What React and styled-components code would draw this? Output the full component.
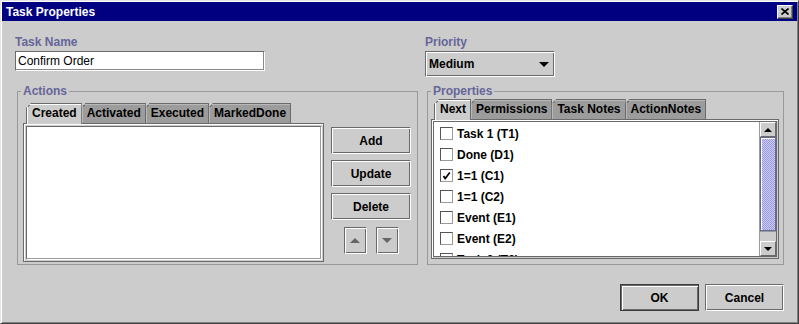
import React from "react";
import styled, { createGlobalStyle } from "styled-components";

const GlobalStyle = createGlobalStyle`
  html, body {
    margin: 0;
    padding: 0;
    background: #cccccc;
  }
  body {
    font-family: "Liberation Sans", Arial, sans-serif;
    font-size: 12px;
  }
  * {
    box-sizing: border-box;
  }
`;

const Window = styled.div`
  width: 799px;
  height: 324px;
  padding: 1px;
  display: flex;
  flex-direction: column;
  background: #cccccc;
  border: 1px solid;
  border-color: #e4e4e4 #404040 #404040 #e4e4e4;
  box-shadow: inset 1px 1px 0 #ffffff, inset -1px -1px 0 #808080;
`;

const TitleBar = styled.div`
  height: 19px;
  flex: none;
  display: flex;
  align-items: center;
  justify-content: space-between;
  padding: 0 4px 0 4px;
  background: #000080;
  color: #ffffff;
  font-weight: bold;
  font-size: 12px;
`;

const CloseButton = styled.div`
  width: 16px;
  height: 14px;
  display: flex;
  align-items: center;
  justify-content: center;
  background: #cccccc;
  border: 1px solid;
  border-color: #ffffff #404040 #404040 #ffffff;
  box-shadow: inset -1px -1px 0 #808080;
`;

const Body = styled.div`
  flex: 1;
  padding: 14px 13px 0 13px;
`;

const TopGrid = styled.div`
  display: grid;
  grid-template-columns: 410px 359px;
  row-gap: 7px;
`;

const Field = styled.div`
  display: flex;
  flex-direction: column;
  align-items: flex-start;
`;

const Label = styled.div`
  height: 15px;
  line-height: 15px;
  margin-bottom: 1px;
  color: #666699;
  font-weight: bold;
`;

const TextField = styled.input`
  width: 250px;
  height: 20px;
  margin: 0;
  padding: 0 2px;
  font: 12px "Liberation Sans", Arial, sans-serif;
  color: #000000;
  background: #ffffff;
  border: 1px solid;
  border-color: #6a6a6a #ffffff #ffffff #6a6a6a;
  box-shadow: inset -1px -1px 0 #8a8a8a;
  outline: none;
`;

const Combo = styled.div`
  width: 130px;
  height: 26px;
  display: flex;
  align-items: center;
  justify-content: space-between;
  padding: 0 5px 0 3px;
  font-weight: bold;
  background: #cccccc;
  border: 1px solid;
  border-color: #6a6a6a #ffffff #ffffff #6a6a6a;
  box-shadow: inset 1px 1px 0 #ffffff, inset -1px -1px 0 #6a6a6a;
`;

const Group = styled.fieldset`
  margin: 0 0 0 2px;
  width: ${({ $w }) => $w}px;
  padding: ${({ $pad }) => $pad};
  border: 1px solid #999999;
  min-inline-size: 0;
`;

const Legend = styled.legend`
  padding: 0 2px;
  margin-left: ${({ $shift }) => $shift}px;
  line-height: 15px;
  color: #666699;
  font-weight: bold;
`;

const ActionsRow = styled.div`
  display: flex;
  align-items: flex-start;
`;

const TabArea = styled.div`
  width: ${({ $w }) => $w}px;
  display: flex;
  flex-direction: column;
`;

const TabStrip = styled.div`
  height: 20px;
  display: flex;
  align-items: flex-end;
  padding-left: 3px;
`;

const Tab = styled.div`
  position: relative;
  z-index: ${({ $active }) => ($active ? 2 : 1)};
  height: ${({ $active }) => ($active ? 21 : 20)}px;
  margin-bottom: ${({ $active }) => ($active ? -1 : 0)}px;
  margin-left: -1px;
  padding: 2px 4px 0 5px;
  line-height: 15px;
  font-weight: bold;
  color: #000000;
  white-space: nowrap;
  background-color: ${({ $active }) => ($active ? "#cccccc" : "#9c9c9c")};
  background-image: linear-gradient(
    135deg,
    transparent 3.2px,
    #6a6a6a 3.2px,
    #6a6a6a 4.6px,
    transparent 4.6px
  );
  background-origin: border-box;
  border: 1px solid #6a6a6a;
  border-bottom: none;
  box-shadow: ${({ $active }) =>
    $active ? "inset 1px 1px 0 #ffffff" : "inset 1px 1px 0 #b8b8b8"};
  clip-path: polygon(5px 0, 100% 0, 100% 100%, 0 100%, 0 5px);

  &:first-child {
    margin-left: 0;
  }
`;

const Panel = styled.div`
  height: ${({ $h }) => $h}px;
  display: flex;
  padding: ${({ $p }) => $p}px;
  background: #cccccc;
  border: 1px solid #6a6a6a;
  box-shadow: inset 1px 1px 0 #ffffff;
`;

const WhiteBox = styled.div`
  flex: 1;
  background: #ffffff;
  border: 1px solid;
  border-color: #6a6a6a #9a9a9a #9a9a9a #6a6a6a;
  box-shadow: 1px 1px 0 #ffffff;
`;

const ButtonColumn = styled.div`
  width: 80px;
  margin-left: 7px;
  padding-top: 24px;
  display: flex;
  flex-direction: column;
  gap: 6px;
`;

const Button = styled.button`
  width: ${({ $w }) => $w}px;
  height: 27px;
  margin: 0;
  padding: 0;
  display: flex;
  align-items: center;
  justify-content: center;
  font: bold 12px "Liberation Sans", Arial, sans-serif;
  color: #000000;
  background: #cccccc;
  border: 1px solid;
  border-color: ${({ $default }) =>
    $default ? "#3a3a3a" : "#6a6a6a #ffffff #ffffff #6a6a6a"};
  box-shadow: ${({ $default }) =>
    $default
      ? "inset 1px 1px 0 #6a6a6a, inset 2px 2px 0 #ffffff, inset -1px -1px 0 #6a6a6a"
      : "inset 1px 1px 0 #ffffff, inset -1px -1px 0 #6a6a6a"};
`;

const ArrowRow = styled.div`
  display: flex;
  justify-content: center;
  gap: 9px;
  margin-top: 1px;
`;

const ScrollPane = styled.div`
  flex: 1;
  display: flex;
  border: 1px solid #6a6a6a;
  background: #ffffff;
`;

const List = styled.div`
  flex: 1;
  padding-top: 1px;
  overflow: hidden;
`;

const Row = styled.div`
  height: 21px;
  display: flex;
  align-items: center;
  gap: 4px;
  padding-left: 6px;
  font-weight: bold;
  color: #000000;
  white-space: nowrap;
`;

const Check = styled.span`
  width: 13px;
  height: 13px;
  flex: none;
  display: flex;
  align-items: center;
  justify-content: center;
  background: #ffffff;
  border: 1px solid;
  border-color: #555555 #9a9a9a #9a9a9a #555555;
`;

const ScrollBar = styled.div`
  width: 17px;
  display: flex;
  flex-direction: column;
  background: #cccccc;
  border-left: 1px solid #9a9a9a;
`;

const ScrollButton = styled.div`
  height: 15px;
  flex: none;
  display: flex;
  align-items: center;
  justify-content: center;
  background: #cccccc;
  border: 1px solid;
  border-color: #ffffff #6a6a6a #6a6a6a #ffffff;
`;

const Thumb = styled.div`
  height: 94px;
  flex: none;
  border: 1px solid #666699;
  background: repeating-conic-gradient(#9a9ad0 0 25%, #ccccff 0 50%) 0 0 / 2px 2px;
  box-shadow: inset 1px 1px 0 #ffffff;
`;

const Track = styled.div`
  flex: 1;
  background: #cccccc;
  border-top: 1px solid #9a9a9a;
`;

const Footer = styled.div`
  display: flex;
  justify-content: flex-end;
  gap: 6px;
  margin-top: 19px;
`;

const Triangle = ({ dir = "down", w = 10, h = 5, color = "#000" }) => (
  <svg width={w} height={h} viewBox={`0 0 ${w} ${h}`}>
    <polygon
      points={
        dir === "down"
          ? `0,0 ${w},0 ${w / 2},${h}`
          : `0,${h} ${w},${h} ${w / 2},0`
      }
      fill={color}
    />
  </svg>
);

const actionTabs = ["Created", "Activated", "Executed", "MarkedDone"];
const propTabs = ["Next", "Permissions", "Task Notes", "ActionNotes"];
const items = [
  { label: "Task 1 (T1)", on: false },
  { label: "Done (D1)", on: false },
  { label: "1=1 (C1)", on: true },
  { label: "1=1 (C2)", on: false },
  { label: "Event (E1)", on: false },
  { label: "Event (E2)", on: false },
  { label: "Task 2 (T2)", on: false },
];

export default function App() {
  return (
    <>
      <GlobalStyle />
      <Window>
        <TitleBar>
          <span>Task Properties</span>
          <CloseButton>
            <svg width="8" height="7" viewBox="0 0 8 7">
              <path d="M0.5 0.5 L7.5 6.5 M7.5 0.5 L0.5 6.5" stroke="#000" strokeWidth="1.6" />
            </svg>
          </CloseButton>
        </TitleBar>
        <Body>
          <TopGrid>
            <Field>
              <Label>Task Name</Label>
              <TextField defaultValue="Confirm Order" readOnly />
            </Field>
            <Field>
              <Label>Priority</Label>
              <Combo>
                <span>Medium</span>
                <Triangle dir="down" w={10} h={5} />
              </Combo>
            </Field>

            <Group $w={401} $pad="4px 5px 2px 5px">
              <Legend $shift={-2}>Actions</Legend>
              <ActionsRow>
                <TabArea $w={301}>
                  <TabStrip>
                    {actionTabs.map((t, i) => (
                      <Tab key={t} $active={i === 0}>
                        {t}
                      </Tab>
                    ))}
                  </TabStrip>
                  <Panel $h={139} $p={2}>
                    <WhiteBox />
                  </Panel>
                </TabArea>
                <ButtonColumn>
                  <Button $w={80}>Add</Button>
                  <Button $w={80}>Update</Button>
                  <Button $w={80}>Delete</Button>
                  <ArrowRow>
                    <Button $w={23}>
                      <Triangle dir="up" w={10} h={5} color="#666" />
                    </Button>
                    <Button $w={23}>
                      <Triangle dir="down" w={10} h={5} color="#666" />
                    </Button>
                  </ArrowRow>
                </ButtonColumn>
              </ActionsRow>
            </Group>

            <Group $w={357} $pad="0 4px 5px 3px">
              <Legend $shift={0}>Properties</Legend>
              <TabArea $w={348}>
                <TabStrip>
                  {propTabs.map((t, i) => (
                    <Tab key={t} $active={i === 0}>
                      {t}
                    </Tab>
                  ))}
                </TabStrip>
                <Panel $h={140} $p={1}>
                  <ScrollPane>
                    <List>
                      {items.map((it) => (
                        <Row key={it.label}>
                          <Check>
                            {it.on && (
                              <svg width="9" height="9" viewBox="0 0 9 9">
                                <path d="M1.5 5 L3.2 7.5 L7.8 1.5" stroke="#000" strokeWidth="1.7" fill="none" />
                              </svg>
                            )}
                          </Check>
                          <span>{it.label}</span>
                        </Row>
                      ))}
                    </List>
                    <ScrollBar>
                      <ScrollButton>
                        <Triangle dir="up" w={8} h={4} />
                      </ScrollButton>
                      <Thumb />
                      <Track />
                      <ScrollButton>
                        <Triangle dir="down" w={8} h={4} />
                      </ScrollButton>
                    </ScrollBar>
                  </ScrollPane>
                </Panel>
              </TabArea>
            </Group>
          </TopGrid>
          <Footer>
            <Button $w={79} $default>
              OK
            </Button>
            <Button $w={79}>Cancel</Button>
          </Footer>
        </Body>
      </Window>
    </>
  );
}
